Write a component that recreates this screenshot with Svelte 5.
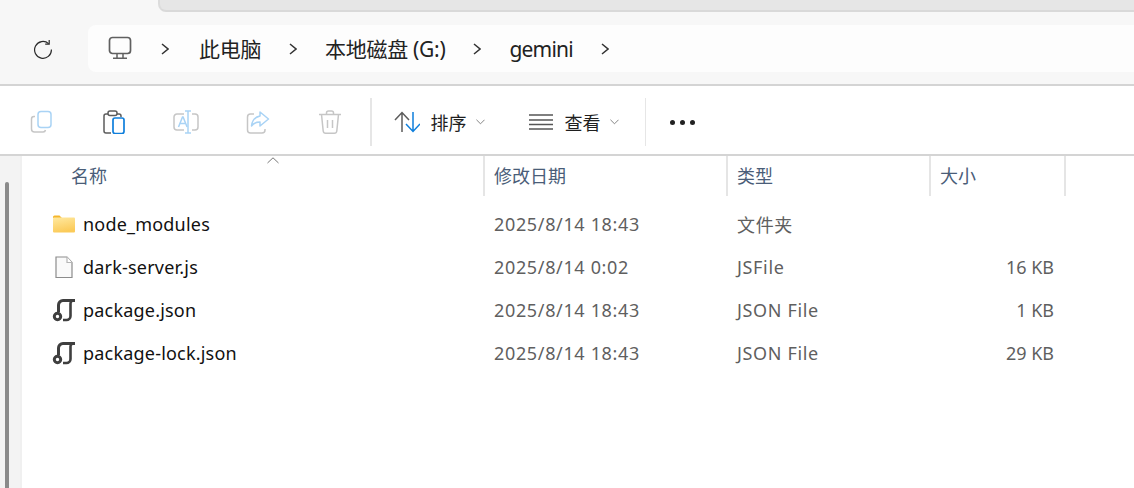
<script>
  const crumbs = ["此电脑", "本地磁盘 (G:)", "gemini"];

  const columns = [
    { label: "名称", sorted: true },
    { label: "修改日期" },
    { label: "类型" },
    { label: "大小" },
  ];

  const files = [
    { name: "node_modules", icon: "folder", date: "2025/8/14 18:43", type: "文件夹", size: "" },
    { name: "dark-server.js", icon: "file", date: "2025/8/14 0:02", type: "JSFile", size: "16 KB" },
    { name: "package.json", icon: "json", date: "2025/8/14 18:43", type: "JSON File", size: "1 KB" },
    { name: "package-lock.json", icon: "json", date: "2025/8/14 18:43", type: "JSON File", size: "29 KB" },
  ];
</script>

<div class="window">
  <div class="tabstrip"><div class="tab"></div></div>

  <div class="navbar">
    <button class="refresh" aria-label="刷新">
      <svg width="20" height="20" viewBox="0 0 20 20" fill="none" stroke="#2b2b2b" stroke-width="1.2">
        <path d="M15.6 4.6A8.4 8.4 0 1 0 18.4 10.6" />
        <path d="M16.2 1V5.1H12.2" />
      </svg>
    </button>
    <div class="address">
      <svg class="pc" width="24" height="24" viewBox="0 0 24 24" fill="none" stroke="#606060" stroke-width="1.7">
        <rect x="1.5" y="1.5" width="21" height="16" rx="3" />
        <path d="M9 18v4M15 18v4M5 22.2h14" stroke-width="1.5" />
      </svg>
      <svg class="chev start" width="8" height="12" viewBox="0 0 8 12" fill="none" stroke="#333" stroke-width="1.5"><path d="M1 1l6 5-6 5" /></svg>
      {#each crumbs as crumb}
        <span class="crumb" class:tight={crumb === "gemini"}>{crumb}</span>
        <svg class="chev" width="8" height="12" viewBox="0 0 8 12" fill="none" stroke="#333" stroke-width="1.5"><path d="M1 1l6 5-6 5" /></svg>
      {/each}
    </div>
  </div>

  <div class="toolbar">
    <button class="tool" aria-label="复制">
      <svg width="24" height="24" viewBox="0 0 24 24" fill="none" stroke-width="1.5">
        <path d="M5 6.5H4a2.5 2.5 0 0 0-2.5 2.5v10A3 3 0 0 0 4.500 22H13a2.500 2.500 0 0 0 2.500-2" stroke="#c6c6c6" />
        <rect x="8" y="1.500" width="13" height="16" rx="3" stroke="#a9d3f5" />
      </svg>
    </button>
    <button class="tool" aria-label="粘贴">
      <svg width="24" height="24" viewBox="0 0 24 24" fill="none" stroke-width="1.5">
        <path d="M6 4H4a2 2 0 0 0-2 2v15a2 2 0 0 0 2 2h5" stroke="#5c5c5c" />
        <path d="M15 4h2a2 2 0 0 1 2 2v1" stroke="#5c5c5c" />
        <rect x="6" y="1" width="9" height="4.500" rx="2" stroke="#5c5c5c" />
        <rect x="11" y="8" width="11" height="15.500" rx="2" stroke="#0f7fdc" stroke-width="1.700" />
      </svg>
    </button>
    <button class="tool" aria-label="重命名">
      <svg width="26" height="24" viewBox="0 0 26 24" fill="none" stroke-width="1.5">
        <path d="M11 4H4a3 3 0 0 0-3 3v10a3 3 0 0 0 3 3h7M19 4h3a3 3 0 0 1 3 3v10a3 3 0 0 1-3 3h-3" stroke="#c6c6c6" />
        <path d="M5.500 17L9.500 7h.6l4 10M7 13.500h5.500" stroke="#a9d3f5" />
        <path d="M12 1h6M15 1v22M12 23h6" stroke="#a9d3f5" />
      </svg>
    </button>
    <button class="tool" aria-label="分享">
      <svg width="24" height="24" viewBox="0 0 24 24" fill="none" stroke-width="1.5">
        <path d="M8 4H4.500A3 3 0 0 0 1.500 7v13a3 3 0 0 0 3 3H16a3 3 0 0 0 3-3v-1" stroke="#c6c6c6" />
        <path d="M14 2l8.500 7-8.500 7v-4c-4 0-6.500 1-8.500 4 .5-5 3.500-9 8.500-10z" stroke="#a9d3f5" stroke-linejoin="round" />
      </svg>
    </button>
    <button class="tool" aria-label="删除">
      <svg width="24" height="24" viewBox="0 0 24 24" fill="none" stroke="#c6c6c6" stroke-width="1.5">
        <path d="M1 4.500h22M8.500 4.500V3a2 2 0 0 1 2-2h3a2 2 0 0 1 2 2v1.500" />
        <path d="M3.500 4.500l1.700 16.500a2.500 2.500 0 0 0 2.500 2.200h8.600a2.500 2.500 0 0 0 2.500-2.200l1.700-16.500" />
        <path d="M9.500 10v8M14.500 10v8" />
      </svg>
    </button>
    <div class="sep first"></div>
    <button class="menu sort">
      <svg width="26" height="22" viewBox="0 0 26 22" fill="none" stroke-width="1.5">
        <path d="M1 9l7-7.500 7 7.500M8 2v19" stroke="#5c5c5c" />
        <path d="M12 13l7 7.500 7-7.500M19 20V1" stroke="#0f7fdc" />
      </svg>
      <span>排序</span>
      <svg class="caret" width="9" height="6" viewBox="0 0 10 6" fill="none" stroke="#777" stroke-width="1"><path d="M.5.5L5 5 9.500.5" /></svg>
    </button>
    <button class="menu view">
      <svg width="24" height="16" viewBox="0 0 24 16" fill="none" stroke="#555" stroke-width="1.500">
        <path d="M0 1h24M0 6h24M0 10.500h24M0 15h24" />
      </svg>
      <span>查看</span>
      <svg class="caret" width="9" height="6" viewBox="0 0 10 6" fill="none" stroke="#777" stroke-width="1"><path d="M.5.5L5 5 9.500.5" /></svg>
    </button>
    <div class="sep"></div>
    <div class="more"><i></i><i></i><i></i></div>
  </div>

  <div class="content">
    <div class="rail"><div class="thumb"></div></div>
    <div class="list">
      <div class="header">
        {#each columns as col}
          <div class="col">
            {#if col.sorted}
              <svg class="sortmark" width="12" height="7" viewBox="0 0 12 7" fill="none" stroke="#777" stroke-width="1"><path d="M.5 6L6 .8 11.500 6" /></svg>
            {/if}
            {col.label}
          </div>
        {/each}
      </div>

      {#each files as f}
        <div class="row">
          <div class="name">
            {#if f.icon === "folder"}
              <svg width="24" height="20" viewBox="0 0 24 20">
                <defs>
                  <linearGradient id="fold" x1="0" y1="0" x2="0.300" y2="1">
                    <stop offset="0" stop-color="#ffe9a0" />
                    <stop offset="1" stop-color="#fbcb5a" />
                  </linearGradient>
                </defs>
                <path d="M1 3a1.500 1.500 0 0 1 1.500-1.500h5L10 4H1z" fill="#f5b62c" />
                <rect x="1" y="3.500" width="22" height="15" rx="1" fill="url(#fold)" />
              </svg>
            {:else if f.icon === "file"}
              <svg width="24" height="24" viewBox="0 0 24 24" fill="#fafafa" stroke="#8c8c8c" stroke-width="1.200">
                <path d="M4 2h11l5 5.500V22.500H4z" />
                <path d="M15 2v5.500h5" fill="#fff" stroke="#b5b5b5" />
              </svg>
            {:else}
              <svg width="24" height="24" viewBox="0 0 24 24" fill="none" stroke="#3f3f3f" stroke-width="3">
                <path d="M6.500 14V7A4.500 4.500 0 0 1 11 2.500H23" />
                <path d="M21.500 2.500a3 3 0 0 0-3 3V18a4 4 0 0 1-4 4H11" stroke-width="2.600" />
                <circle cx="5.500" cy="18.500" r="3.200" stroke-width="3" />
              </svg>
            {/if}
            <span>{f.name}</span>
          </div>
          <div class="meta date">{f.date}</div>
          <div class="meta type">{f.type}</div>
          <div class="meta size">{f.size}</div>
        </div>
      {/each}
    </div>
  </div>
</div>

<style>
  :global(body) {
    background: #fff;
    overflow: hidden;
  }

  .window {
    width: 1134px;
    height: 488px;
    overflow: hidden;
    font-family: "Noto Sans", "Noto Sans CJK SC", sans-serif;
    font-size: 18px;
    color: #1a1a1a;
  }

  button {
    border: none;
    background: none;
    padding: 0;
    font: inherit;
    color: inherit;
  }

  .tabstrip {
    height: 12px;
    background: #f7f7f7;
    padding-left: 158px;
    box-sizing: border-box;
  }

  .tab {
    height: 12px;
    background: #e6e6e6;
    border-left: 2px solid #dcdcdc;
    border-bottom: 2px solid #d9d9d9;
    border-bottom-left-radius: 8px;
    box-sizing: border-box;
  }

  .navbar {
    height: 74px;
    box-sizing: border-box;
    background: #f7f7f7;
    border-bottom: 2px solid #d4d4d4;
    display: flex;
    align-items: flex-start;
    padding-top: 13px;
  }

  .refresh {
    width: 88px;
    height: 47px;
    padding-right: 2px;
    box-sizing: border-box;
    display: flex;
    align-items: center;
    justify-content: center;
  }

  .address {
    flex: 1;
    height: 47px;
    background: #fdfdfd;
    border-radius: 8px 0 0 8px;
    display: flex;
    align-items: center;
    padding-left: 20px;
    gap: 28px;
  }

  .pc {
    margin-right: 1px;
    margin-top: -1px;
  }

  .chev.start {
    margin-right: 2px;
  }

  .crumb {
    color: #222;
    font-size: 21px;
    line-height: 24px;
    letter-spacing: -0.3px;
  }

  .crumb.tight {
    letter-spacing: -0.8px;
  }

  .toolbar {
    height: 70px;
    box-sizing: border-box;
    background: #fff;
    border-bottom: 2px solid #d4d4d4;
    display: flex;
    align-items: center;
    padding: 4px 0 0 6px;
  }

  .tool {
    width: 72px;
    height: 40px;
    display: flex;
    align-items: center;
    justify-content: center;
  }

  .sep {
    width: 1.5px;
    height: 48px;
    background: #e6e6e6;
  }

  .sep.first {
    margin-left: 4px;
  }

  .menu {
    display: flex;
    align-items: center;
    color: #1f1f1f;
  }

  .menu span {
    margin-left: 11px;
    font-size: 18px;
  }

  .caret {
    margin-left: 9px;
  }

  .sort {
    margin-left: 22px;
  }

  .view {
    margin-left: 44px;
  }

  .view span {
    margin-left: 12px;
  }

  .view + .sep {
    margin-left: 26px;
  }

  .more {
    margin-left: 24px;
    display: flex;
    gap: 5px;
  }

  .more i {
    width: 5px;
    height: 5px;
    border-radius: 50%;
    background: #222;
  }

  .content {
    display: flex;
    height: 332px;
  }

  .rail {
    width: 15px;
    background: #f3f3f3;
    border-right: 2px solid #f0f0f0;
    padding: 26px 0 0 5px;
  }

  .thumb {
    width: 4px;
    height: 320px;
    background: #8a8a8a;
    border-radius: 2px 2px 0 0;
  }

  .list {
    flex: 1;
  }

  .header,
  .row {
    display: grid;
    grid-template-columns: 463px 243px 203px 135px;
  }

  .header {
    height: 40px;
    margin-bottom: 6px;
  }

  .col {
    position: relative;
    padding-left: 9px;
    line-height: 40px;
    color: #4a5d78;
    border-right: 2px solid #e5e5e5;
    box-sizing: border-box;
  }

  .col:first-child {
    padding-left: 49px;
  }

  .sortmark {
    position: absolute;
    left: 245px;
    top: 1px;
  }

  .row {
    height: 43px;
    align-items: center;
  }

  .name {
    display: flex;
    align-items: center;
    padding-left: 30px;
    gap: 7px;
    color: #111;
    letter-spacing: 0.2px;
  }

  .name svg {
    flex: none;
  }

  .meta {
    padding-left: 9px;
    color: #5f5f5f;
  }

  .date,
  .type {
    letter-spacing: 0.65px;
  }

  .size {
    text-align: right;
    padding-right: 12px;
  }
</style>
